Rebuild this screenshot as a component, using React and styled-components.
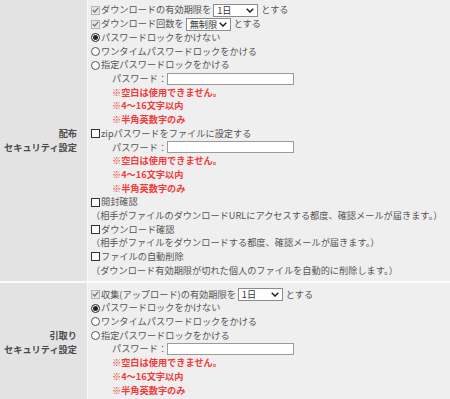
import React from 'react';
import styled, { createGlobalStyle } from 'styled-components';

const GlobalStyle = createGlobalStyle`
  html, body {
    margin: 0;
    padding: 0;
    background: #efefef;
    overflow: hidden;
  }
  body {
    font-family: "Noto Sans CJK JP", "Noto Sans", sans-serif;
    font-size: 9.2px;
    color: #555;
  }
`;

const Table = styled.div`
  margin-top: -1px;
  width: 450px;
`;

const Row = styled.div`
  display: grid;
  grid-template-columns: 88px 1fr;
  border-bottom: 2px solid #fbfbfb;
`;

const Label = styled.div`
  background: #e3e3e3;
  border-right: 1px solid #fbfbfb;
  display: flex;
  flex-direction: column;
  justify-content: center;
  align-items: flex-end;
  padding-right: 10px;
  font-weight: bold;
  line-height: 14px;
  color: #4a4a4a;
`;

const Cell = styled.div`
  background: #efefef;
  padding: 4px 0 4px 3px;
`;

const Line = styled.div`
  display: flex;
  align-items: center;
  height: ${p => (p.$tall ? '14px' : '13.7px')};
  padding-left: ${p => (p.$indent ? '21px' : '0')};
  white-space: nowrap;
  line-height: 13.7px;
`;

const Warn = styled(Line)`
  color: #f23b3b;
  font-weight: bold;
`;

const Box = styled.span`
  box-sizing: border-box;
  width: 9px;
  height: 9px;
  margin-right: 1px;
  flex: none;
  display: inline-flex;
  align-items: center;
  justify-content: center;
  border: 1px solid ${p => (p.$checked ? '#b4b4b4' : '#333')};
  background: ${p => (p.$checked ? '#e6e6e6' : '#fff')};
`;

const Dot = styled.span`
  box-sizing: border-box;
  width: 9px;
  height: 9px;
  margin-right: 1px;
  flex: none;
  border-radius: 50%;
  display: inline-flex;
  align-items: center;
  justify-content: center;
  border: 1px solid ${p => (p.$checked ? '#222' : '#555')};
  background: #fff;

  &::after {
    content: '';
    display: ${p => (p.$checked ? 'block' : 'none')};
    width: 5px;
    height: 5px;
    border-radius: 50%;
    background: #222;
  }
`;

const SelectWrap = styled.span`
  position: relative;
  display: inline-flex;
  align-items: center;
  box-sizing: border-box;
  width: 45px;
  height: 13px;
  margin: 0 3px 0 2px;
  padding-left: 3px;
  border: 1px solid #8c8c8c;
  background: #fff;
  color: #333;
  font-size: 9.2px;
  line-height: 11px;
`;

const Chevron = styled.svg`
  position: absolute;
  right: 3px;
  top: 3px;
  pointer-events: none;
`;

const TextBox = styled.input`
  box-sizing: border-box;
  width: 127px;
  height: 12px;
  border: 1px solid #9a9a9a;
  background: #fff;
  padding: 0;
  margin: 0;
`;

const Check = ({ checked, children, tall }) => (
  <Line $tall={tall}>
    <Box $checked={checked}>
      {checked && (
        <svg width="7" height="6" viewBox="0 0 7 6">
          <path d="M0.8 3 L2.7 5 L6.2 0.8" fill="none" stroke="#777" strokeWidth="1.3" />
        </svg>
      )}
    </Box>
    {children}
  </Line>
);

const Radio = ({ checked, children }) => (
  <Line>
    <Dot $checked={checked} />
    {children}
  </Line>
);

// looks like a native select; the value is all that shows
const Pick = ({ value }) => (
  <SelectWrap role="combobox" aria-label={value}>
    {value}
    <Chevron width="8" height="5" viewBox="0 0 8 5">
      <path d="M0.7 0.7 L4 4 L7.3 0.7" fill="none" stroke="#222" strokeWidth="1.5" />
    </Chevron>
  </SelectWrap>
);

const Password = () => (
  <>
    <Line $indent>
      パスワード：<TextBox type="password" />
    </Line>
    <Warn $indent>※空白は使用できません。</Warn>
    <Warn $indent>※4～16文字以内</Warn>
    <Warn $indent>※半角英数字のみ</Warn>
  </>
);

const LockChoices = () => (
  <>
    <Radio checked>パスワードロックをかけない</Radio>
    <Radio>ワンタイムパスワードロックをかける</Radio>
    <Radio>指定パスワードロックをかける</Radio>
    <Password />
  </>
);

export default function App() {
  return (
    <>
      <GlobalStyle />
      <Table>
        <Row>
          <Label>
            <span>配布</span>
            <span>セキュリティ設定</span>
          </Label>
          <Cell>
            <Check checked tall>
              ダウンロードの有効期限を<Pick value="1日" />とする
            </Check>
            <Check checked tall>
              ダウンロード回数を<Pick value="無制限" />とする
            </Check>
            <LockChoices />
            <Check>zipパスワードをファイルに設定する</Check>
            <Password />
            <Check>開封確認</Check>
            <Line>（相手がファイルのダウンロードURLにアクセスする都度、確認メールが届きます。）</Line>
            <Check>ダウンロード確認</Check>
            <Line>（相手がファイルをダウンロードする都度、確認メールが届きます。）</Line>
            <Check>ファイルの自動削除</Check>
            <Line>（ダウンロード有効期限が切れた個人のファイルを自動的に削除します。）</Line>
          </Cell>
        </Row>
        <Row>
          <Label>
            <span>引取り</span>
            <span>セキュリティ設定</span>
          </Label>
          <Cell>
            <Check checked tall>
              収集(アップロード)の有効期限を<Pick value="1日" />とする
            </Check>
            <LockChoices />
          </Cell>
        </Row>
      </Table>
    </>
  );
}
